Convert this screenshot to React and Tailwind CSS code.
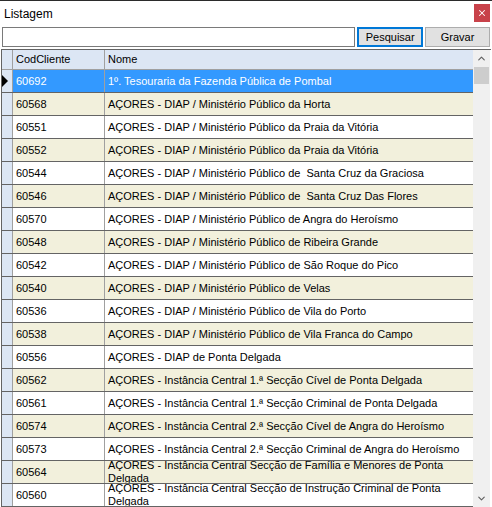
import { X, ChevronUp, ChevronDown } from "lucide-react";

const rows = [
  ["60692", "1º. Tesouraria da Fazenda Pública de Pombal"],
  ["60568", "AÇORES - DIAP / Ministério Público da Horta"],
  ["60551", "AÇORES - DIAP / Ministério Público da Praia da Vitória"],
  ["60552", "AÇORES - DIAP / Ministério Público da Praia da Vitória"],
  ["60544", "AÇORES - DIAP / Ministério Público de  Santa Cruz da Graciosa"],
  ["60546", "AÇORES - DIAP / Ministério Público de  Santa Cruz Das Flores"],
  ["60570", "AÇORES - DIAP / Ministério Público de Angra do Heroísmo"],
  ["60548", "AÇORES - DIAP / Ministério Público de Ribeira Grande"],
  ["60542", "AÇORES - DIAP / Ministério Público de São Roque do Pico"],
  ["60540", "AÇORES - DIAP / Ministério Público de Velas"],
  ["60536", "AÇORES - DIAP / Ministério Público de Vila do Porto"],
  ["60538", "AÇORES - DIAP / Ministério Público de Vila Franca do Campo"],
  ["60556", "AÇORES - DIAP de Ponta Delgada"],
  ["60562", "AÇORES - Instância Central 1.ª Secção Cível de Ponta Delgada"],
  ["60561", "AÇORES - Instância Central 1.ª Secção Criminal de Ponta Delgada"],
  ["60574", "AÇORES - Instância Central 2.ª Secção Cível de Angra do Heroísmo"],
  ["60573", "AÇORES - Instância Central 2.ª Secção Criminal de Angra do Heroísmo"],
  ["60564", "AÇORES - Instância Central Secção de Família e Menores de Ponta Delgada"],
  ["60560", "AÇORES - Instância Central Secção de Instrução Criminal de Ponta Delgada"],
];

export default function App() {
  return (
    <div
      className="w-[492px] h-[507px] overflow-hidden bg-white border-t border-[#2b2b2b] flex flex-col text-[11px] text-black"
      style={{ fontFamily: "'Liberation Sans', Arial, sans-serif" }}
    >
      {/* title bar */}
      <div className="h-[26px] flex items-center justify-between pl-[4px] pr-[2px] shrink-0">
        <span className="text-[12px] leading-none">Listagem</span>
        <div className="w-[16px] h-[18px] bg-[#c8424a] flex items-center justify-center mt-[-3px]">
          <X size={10} strokeWidth={2.5} color="white" />
        </div>
      </div>

      {/* search bar */}
      <div className="h-[20px] flex gap-[2px] px-[2px] shrink-0">
        <div className="w-[354px] h-full border border-[#7a7a7a] bg-white" />
        <button className="w-[66px] h-full border-2 border-[#0078d7] bg-[#e1e1e1] flex items-center justify-center leading-none">
          Pesquisar
        </button>
        <button className="w-[65px] h-full border border-[#adadad] bg-[#e1e1e1] flex items-center justify-center leading-none">
          Gravar
        </button>
      </div>

      {/* grid */}
      <div className="mt-[2px] flex-1 flex border-t border-l border-[#646464] ml-[1px] mr-[1px] overflow-hidden">
        <div className="flex-1 flex flex-col overflow-hidden">
          <div className="h-[20px] flex shrink-0 bg-[#dce6f4] border-b border-[#a0a0a0]">
            <div className="w-[11px] border-r border-[#a0a0a0]" />
            <div className="w-[92px] border-r border-[#a0a0a0] pl-[3px] flex items-center">CodCliente</div>
            <div className="flex-1 pl-[3px] flex items-center">Nome</div>
          </div>
          {rows.map(([code, name], i) => {
            const selected = i === 0;
            const bg = selected ? "bg-[#3399ff] text-white" : i % 2 === 1 ? "bg-[#f2f0dc]" : "bg-white";
            return (
              <div key={code} className="h-[23px] flex shrink-0 border-b border-[#646464]">
                <div className="w-[11px] bg-[#dce6f4] border-r border-[#a0a0a0] flex items-center">
                  {selected && (
                    <svg width="7" height="12" viewBox="0 0 7 12">
                      <path d="M0 0 L6 6 L0 12 Z" fill="black" />
                    </svg>
                  )}
                </div>
                <div className={`w-[92px] border-r border-[#a0a0a0] pl-[3px] flex items-center ${bg}`}>
                  {code}
                </div>
                <div className={`flex-1 pl-[3px] pr-[4px] flex items-center overflow-hidden leading-[13px] ${bg}`}>
                  <span className="whitespace-pre-wrap">{name}</span>
                </div>
              </div>
            );
          })}
        </div>

        {/* scrollbar */}
        <div className="w-[17px] shrink-0 bg-[#f0f0f0] flex flex-col items-center mr-[1px]">
          <div className="h-[17px] flex items-center justify-center">
            <ChevronUp size={11} strokeWidth={2.5} color="#606060" />
          </div>
          <div className="w-[15px] h-[17px] bg-[#cdcdcd]" />
          <div className="flex-1" />
          <div className="h-[17px] flex items-center justify-center">
            <ChevronDown size={11} strokeWidth={2.5} color="#606060" />
          </div>
        </div>
      </div>
    </div>
  );
}
